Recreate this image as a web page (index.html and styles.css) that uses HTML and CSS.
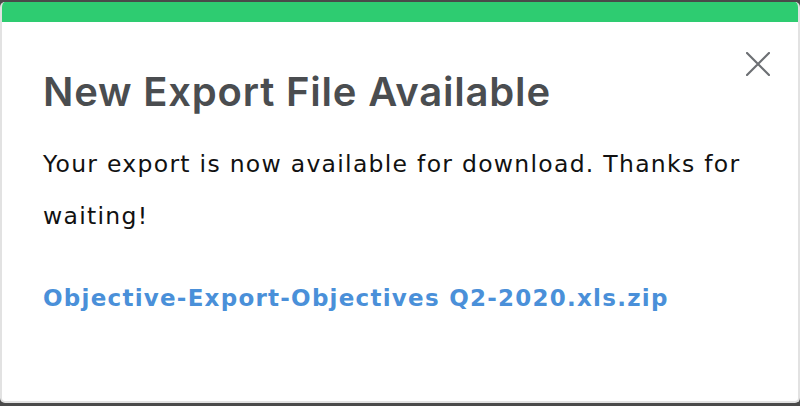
FILE: index.html
```html
<!DOCTYPE html>
<html lang="en">
<head>
    <meta charset="UTF-8">
    <meta name="viewport" content="width=device-width, initial-scale=1.0">
    <title>New Export File Available</title>
    <link rel="stylesheet" href="styles.css">
</head>
<body>
    <div class="modal">
        <div class="modal-bar"></div>
        <div class="modal-body">
            <button class="close" aria-label="Close">
                <svg width="24" height="24" viewBox="0 0 24 24">
                    <path d="M1 1 L23 23 M23 1 L1 23" stroke="#6d7074" stroke-width="2.2" stroke-linecap="round" fill="none"/>
                </svg>
            </button>
            <h2 class="title">New Export File Available</h2>
            <p class="text">Your export is now available for download. Thanks for waiting!</p>
            <a class="file-link" href="#">Objective-Export-Objectives Q2-2020.xls.zip</a>
        </div>
    </div>
</body>
</html>
```

FILE: styles.css
```css
/* page behind the modal */
body {
    margin: 0;
    height: 406px;
    overflow: hidden;
    background-color: #4a4a4a;
    font-family: "DejaVu Sans", Inter, sans-serif;
}

/* modal box */
.modal {
    margin-top: 2px;
    height: 399px;
    background-color: #fff;
    border: 2px solid #e2e2e2;
    border-top: none;
    border-radius: 5px;
    overflow: hidden;
    display: flex;
    flex-direction: column;
}

.modal-bar {
    height: 20px;
    margin: 0 -2px;
    background-color: #2ecc71;
}

.modal-body {
    position: relative;
    padding: 0 41px;
}

.close {
    position: absolute;
    top: 30px;
    right: 28px;
    padding: 0;
    border: none;
    background: none;
    cursor: pointer;
}

.title {
    margin: 46px 0 0;
    font-family: Inter, "DejaVu Sans", sans-serif;
    font-size: 40px;
    font-weight: 600;
    line-height: 48px;
    letter-spacing: 0.8px;
    color: #4a4d50;
}

.text {
    margin: 22px 0 0;
    font-size: 23.5px;
    line-height: 52px;
    letter-spacing: 1.28px;
    color: #111;
}

.file-link {
    display: block;
    margin-top: 41px;
    font-size: 23px;
    font-weight: 700;
    line-height: 30px;
    letter-spacing: 1.25px;
    color: #4a90d9;
    text-decoration: none;
}
```
